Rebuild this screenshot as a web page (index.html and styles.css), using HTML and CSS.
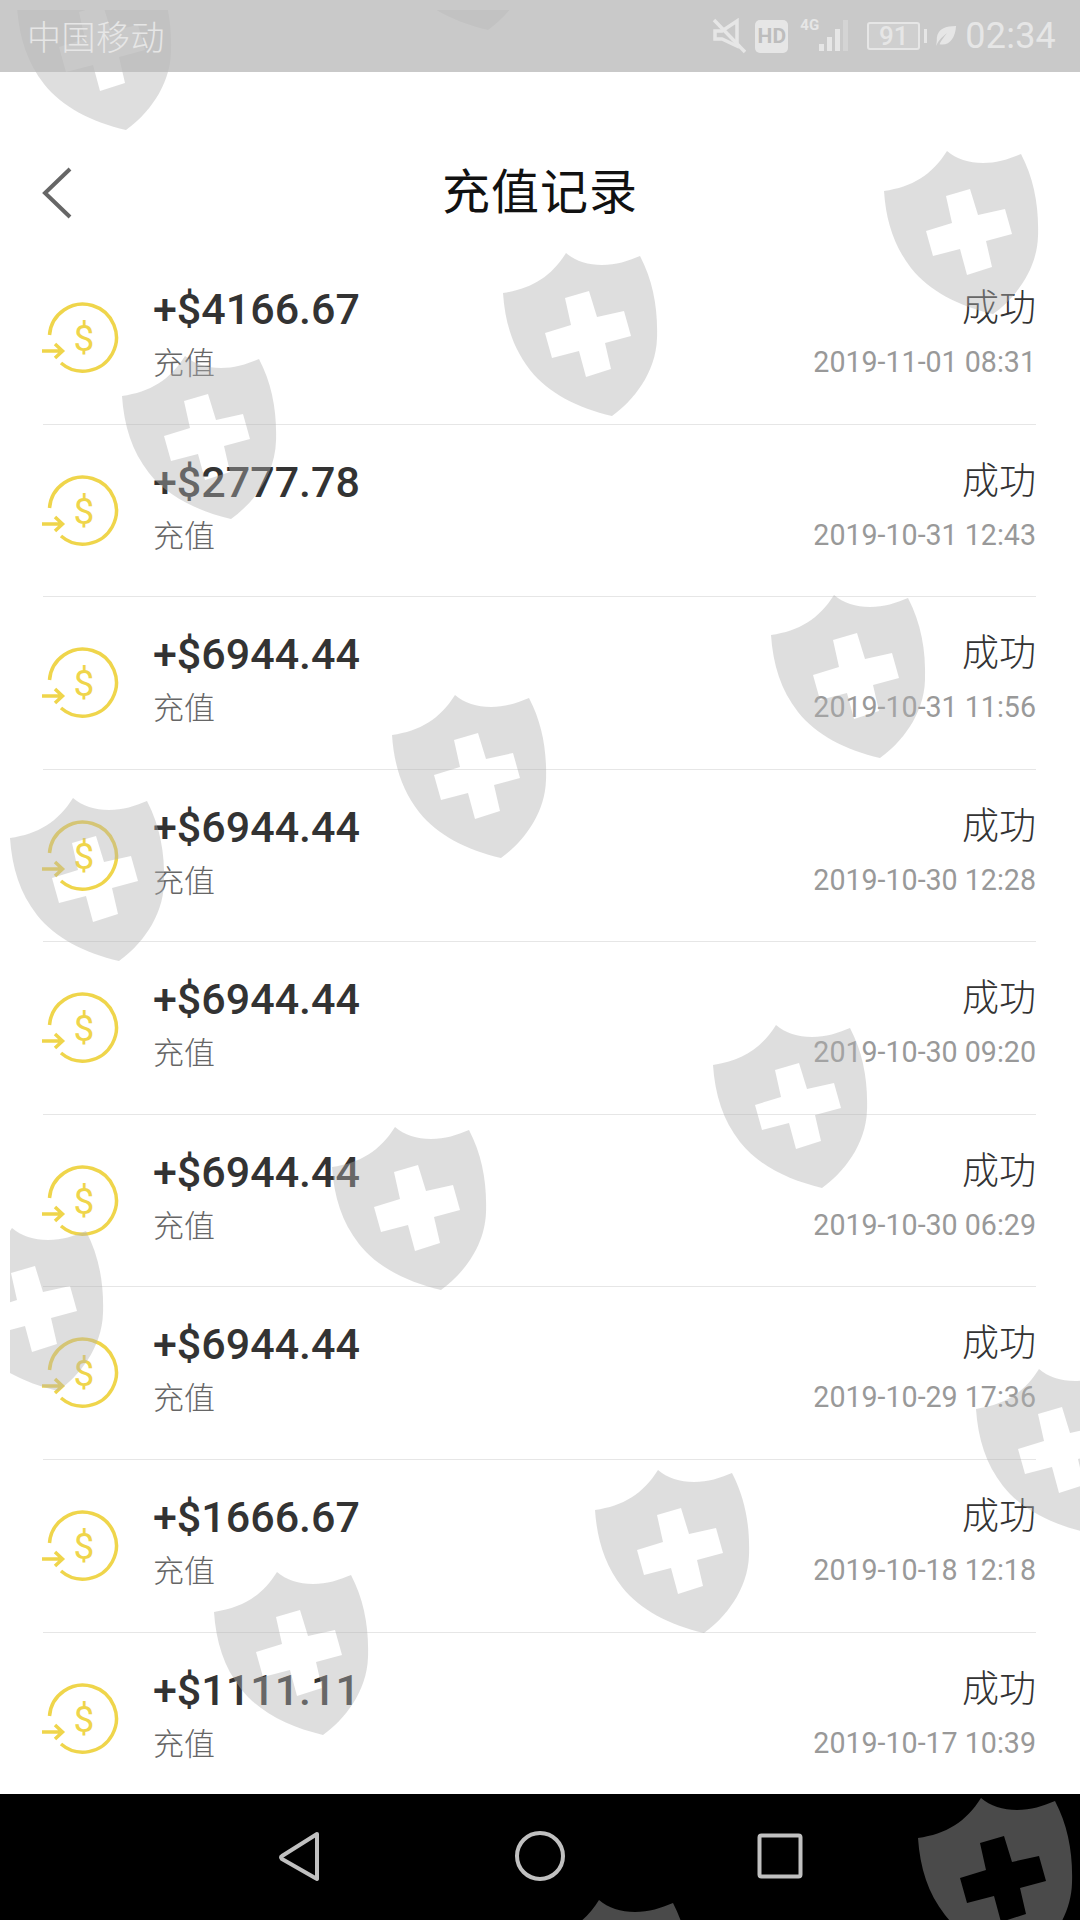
FILE: index.html
```html
<!DOCTYPE html>
<html lang="zh">
<head>
<meta charset="utf-8">
<title>充值记录</title>
<link rel="stylesheet" href="styles.css">
</head>
<body>
<svg class="defs" width="0" height="0">
  <defs>
    <symbol id="coin" viewBox="0 0 84 80">
      <path class="coin-line" d="M8.500 34 A33.500 33.500 0 1 1 20 62"/>
      <path class="coin-line" d="M1 50 H21 M14 43 L21.500 50 L14 57"/>
    </symbol>
    <path id="shield" fill-rule="evenodd" d="M63 0C72 8 85 12 99 12C113 12 125 8 137 3C150 28 155 55 154 85C153 120 130 148 109 163C75 155 45 140 27 117C10 95 2 70 0 40C28 36 48 24 63 0ZM62 45L86 38L94 64L121 58L128 83L102 90L108 116L83 124L76 98L49 105L42 80L68 72Z"/>
  </defs>
</svg>
<div class="screen">
  <div class="status">
    <div class="carrier">中国移动</div>
    <div class="status-right">
      <svg class="st-mute" width="34" height="36" viewBox="0 0 34 36">
        <path class="st-line" d="M3 13 H10 L25 3 V28 L10 21 H3 Z"/>
        <path class="st-line" d="M2 2 L33 34"/>
      </svg>
      <div class="st-hd">HD</div>
      <div class="st-signal">
        <span class="st-4g">4G</span>
        <svg width="34" height="34" viewBox="0 0 34 34">
          <rect class="st-fill" x="3" y="26" width="5" height="7"/>
          <rect class="st-fill" x="11" y="19" width="5" height="14"/>
          <rect class="st-fill" x="19" y="11" width="5" height="22"/>
          <rect class="st-dim" x="27" y="2" width="5" height="31"/>
        </svg>
      </div>
      <div class="st-battery"><span class="st-level">91</span></div>
      <div class="st-nub"></div>
      <svg class="st-leaf" width="22" height="24" viewBox="0 0 24 24">
        <path class="st-fill" d="M23 1C12 1 3 4 2 14C2 17 2 19 1 23C3 19 6 14 13 9C9 14 6 18 5 21C16 23 22 14 23 1Z"/>
      </svg>
      <div class="clock">02:34</div>
    </div>
  </div>

  <header class="header">
    <svg class="back" width="32" height="52" viewBox="0 0 32 52"><path d="M29 2 L4 26 L29 50"/></svg>
    <h1 class="title">充值记录</h1>
  </header>

  <ul class="list">
    <li class="row">
      <div class="coin"><svg width="84" height="80"><use href="#coin"/></svg><span class="dollar">$</span></div>
      <div class="main"><div class="amount">+$4166.67</div><div class="kind">充值</div></div>
      <div class="side"><div class="state">成功</div><div class="date">2019-11-01 08:31</div></div>
    </li>
    <li class="row">
      <div class="coin"><svg width="84" height="80"><use href="#coin"/></svg><span class="dollar">$</span></div>
      <div class="main"><div class="amount">+$2777.78</div><div class="kind">充值</div></div>
      <div class="side"><div class="state">成功</div><div class="date">2019-10-31 12:43</div></div>
    </li>
    <li class="row">
      <div class="coin"><svg width="84" height="80"><use href="#coin"/></svg><span class="dollar">$</span></div>
      <div class="main"><div class="amount">+$6944.44</div><div class="kind">充值</div></div>
      <div class="side"><div class="state">成功</div><div class="date">2019-10-31 11:56</div></div>
    </li>
    <li class="row">
      <div class="coin"><svg width="84" height="80"><use href="#coin"/></svg><span class="dollar">$</span></div>
      <div class="main"><div class="amount">+$6944.44</div><div class="kind">充值</div></div>
      <div class="side"><div class="state">成功</div><div class="date">2019-10-30 12:28</div></div>
    </li>
    <li class="row">
      <div class="coin"><svg width="84" height="80"><use href="#coin"/></svg><span class="dollar">$</span></div>
      <div class="main"><div class="amount">+$6944.44</div><div class="kind">充值</div></div>
      <div class="side"><div class="state">成功</div><div class="date">2019-10-30 09:20</div></div>
    </li>
    <li class="row">
      <div class="coin"><svg width="84" height="80"><use href="#coin"/></svg><span class="dollar">$</span></div>
      <div class="main"><div class="amount">+$6944.44</div><div class="kind">充值</div></div>
      <div class="side"><div class="state">成功</div><div class="date">2019-10-30 06:29</div></div>
    </li>
    <li class="row">
      <div class="coin"><svg width="84" height="80"><use href="#coin"/></svg><span class="dollar">$</span></div>
      <div class="main"><div class="amount">+$6944.44</div><div class="kind">充值</div></div>
      <div class="side"><div class="state">成功</div><div class="date">2019-10-29 17:36</div></div>
    </li>
    <li class="row">
      <div class="coin"><svg width="84" height="80"><use href="#coin"/></svg><span class="dollar">$</span></div>
      <div class="main"><div class="amount">+$1666.67</div><div class="kind">充值</div></div>
      <div class="side"><div class="state">成功</div><div class="date">2019-10-18 12:18</div></div>
    </li>
    <li class="row row-last">
      <div class="coin"><svg width="84" height="80"><use href="#coin"/></svg><span class="dollar">$</span></div>
      <div class="main"><div class="amount">+$1111.11</div><div class="kind">充值</div></div>
      <div class="side"><div class="state">成功</div><div class="date">2019-10-17 10:39</div></div>
    </li>
  </ul>

  <nav class="nav">
    <svg width="46" height="52" viewBox="0 0 46 52"><path d="M40 4 L5 26 Q3 27 5 29 L40 49 Z"/></svg>
    <svg width="52" height="52" viewBox="0 0 52 52"><circle cx="26" cy="26" r="23"/></svg>
    <svg width="46" height="46" viewBox="0 0 46 46"><rect x="2.500" y="2.500" width="41" height="41" rx="2"/></svg>
  </nav>

  <svg class="watermark" width="1070" height="1910" viewBox="10 10 1070 1910">
    <use href="#shield" x="17" y="-33"/>
    <use href="#shield" x="379" y="-133"/>
    <use href="#shield" x="884" y="151"/>
    <use href="#shield" x="503" y="253"/>
    <use href="#shield" x="122" y="356"/>
    <use href="#shield" x="771" y="595"/>
    <use href="#shield" x="392" y="695"/>
    <use href="#shield" x="10" y="798"/>
    <use href="#shield" x="713" y="1025"/>
    <use href="#shield" x="332" y="1127"/>
    <use href="#shield" x="-51" y="1228"/>
    <use href="#shield" x="976" y="1369"/>
    <use href="#shield" x="595" y="1470"/>
    <use href="#shield" x="214" y="1572"/>
    <use href="#shield" x="918" y="1798"/>
    <use href="#shield" x="536" y="1900"/>
  </svg>
</div>
</body>
</html>
```
FILE: styles.css
```css
* { box-sizing: border-box; }
html, body { margin: 0; padding: 0; background: #fff; }
body { font-family: Roboto, "Noto Sans CJK SC", sans-serif; }
.defs { position: absolute; }
.screen {
  position: relative;
  width: 1080px;
  height: 1920px;
  overflow: hidden;
  display: flex;
  flex-direction: column;
  background: #fff;
}

/* status bar */
.status {
  position: relative;
  z-index: 2;
  flex: 0 0 72px;
  display: flex;
  align-items: center;
  justify-content: space-between;
  padding: 0 24px 0 27px;
  background: rgba(186, 186, 186, 0.78);
  color: #e6e6e6;
}
.carrier { font-family: "Noto Sans CJK SC", sans-serif; font-weight: 300; font-size: 34px; line-height: 40px; letter-spacing: 0.5px; }
.status-right { display: flex; align-items: center; }
.st-line { fill: none; stroke: #e6e6e6; stroke-width: 3.5; }
.st-fill { fill: #e6e6e6; }
.st-dim { fill: #d4d4d4; }
.st-mute { margin-right: 9px; }
.st-hd {
  width: 33px;
  height: 33px;
  border-radius: 5px;
  background: #e6e6e6;
  color: #bdbdbd;
  font-size: 21px;
  font-weight: 700;
  line-height: 33px;
  text-align: center;
  margin-right: 12px;
}
.st-signal { position: relative; width: 50px; height: 36px; display: flex; justify-content: flex-end; margin-right: 17px; }
.st-4g { position: absolute; left: 0; top: 0; font-size: 15px; font-weight: 700; line-height: 15px; }
.st-battery {
  width: 53px;
  height: 28px;
  border: 2px solid #e6e6e6;
  border-radius: 3px;
  background: rgba(255, 255, 255, 0.12);
  display: flex;
  align-items: center;
  justify-content: center;
}
.st-level { font-size: 26px; line-height: 24px; font-weight: 500; }
.st-nub { width: 3px; height: 14px; background: #e6e6e6; margin: 0 8px 0 4px; }
.st-leaf { margin-right: 8px; }
.clock { font-size: 36px; line-height: 42px; font-weight: 400; letter-spacing: 0.2px; }

/* header */
.header {
  position: relative;
  flex: 0 0 180px;
  display: flex;
  align-items: center;
  justify-content: center;
  padding-top: 52px;
}
.back { position: absolute; left: 41px; top: 95px; }
.back path { fill: none; stroke: #666; stroke-width: 4; }
.title { margin: 0; font-family: "Noto Sans CJK SC", sans-serif; font-size: 48px; line-height: 60px; font-weight: 400; color: #111; letter-spacing: 1px; }

/* records */
.list { flex: 1 1 auto; min-height: 0; overflow: hidden; margin: 0; padding: 0; list-style: none; }
.row {
  height: 172.57px;
  margin: 0 44px 0 43px;
  display: flex;
  align-items: flex-start;
  border-bottom: 1px solid #e6e6e6;
}
.row-last { border-bottom: 0; }
.coin {
  display: grid;
  place-items: center;
  width: 110px;
  margin-top: 49px;
  margin-left: -2px;
  margin-right: 2px;
  justify-content: start;
}
.coin svg, .dollar { grid-area: 1 / 1; }
.coin-line { fill: none; stroke: #efd54b; stroke-width: 3.5; }
.dollar { color: #efd54b; font-size: 37px; line-height: 42px; margin-left: 2px; margin-top: -4px; }
.main { flex: 1 1 auto; padding-top: 32px; }
.amount { font-size: 43px; line-height: 50px; font-weight: 500; color: #333; }
.kind { font-family: "Noto Sans CJK SC", sans-serif; font-weight: 300; font-size: 31px; line-height: 40px; color: #666; margin-top: 7px; }
.side { display: flex; flex-direction: column; align-items: flex-end; padding-top: 29px; }
.state { font-family: "Noto Sans CJK SC", sans-serif; font-weight: 300; font-size: 37px; line-height: 48px; color: #333; }
.date { font-size: 28.600px; line-height: 36px; color: #999; margin-top: 15px; }

/* system navigation */
.nav {
  flex: 0 0 126px;
  background: #000;
  display: flex;
  align-items: center;
  justify-content: center;
  gap: 191px;
  padding-bottom: 3px;
}
.nav path, .nav circle, .nav rect { fill: none; stroke: #c0c0c0; stroke-width: 4; stroke-linejoin: round; }

/* watermark layer */
.watermark { position: absolute; left: 10px; top: 10px; z-index: 1; pointer-events: none; }
.watermark use { fill: rgba(176, 176, 176, 0.42); }
```
